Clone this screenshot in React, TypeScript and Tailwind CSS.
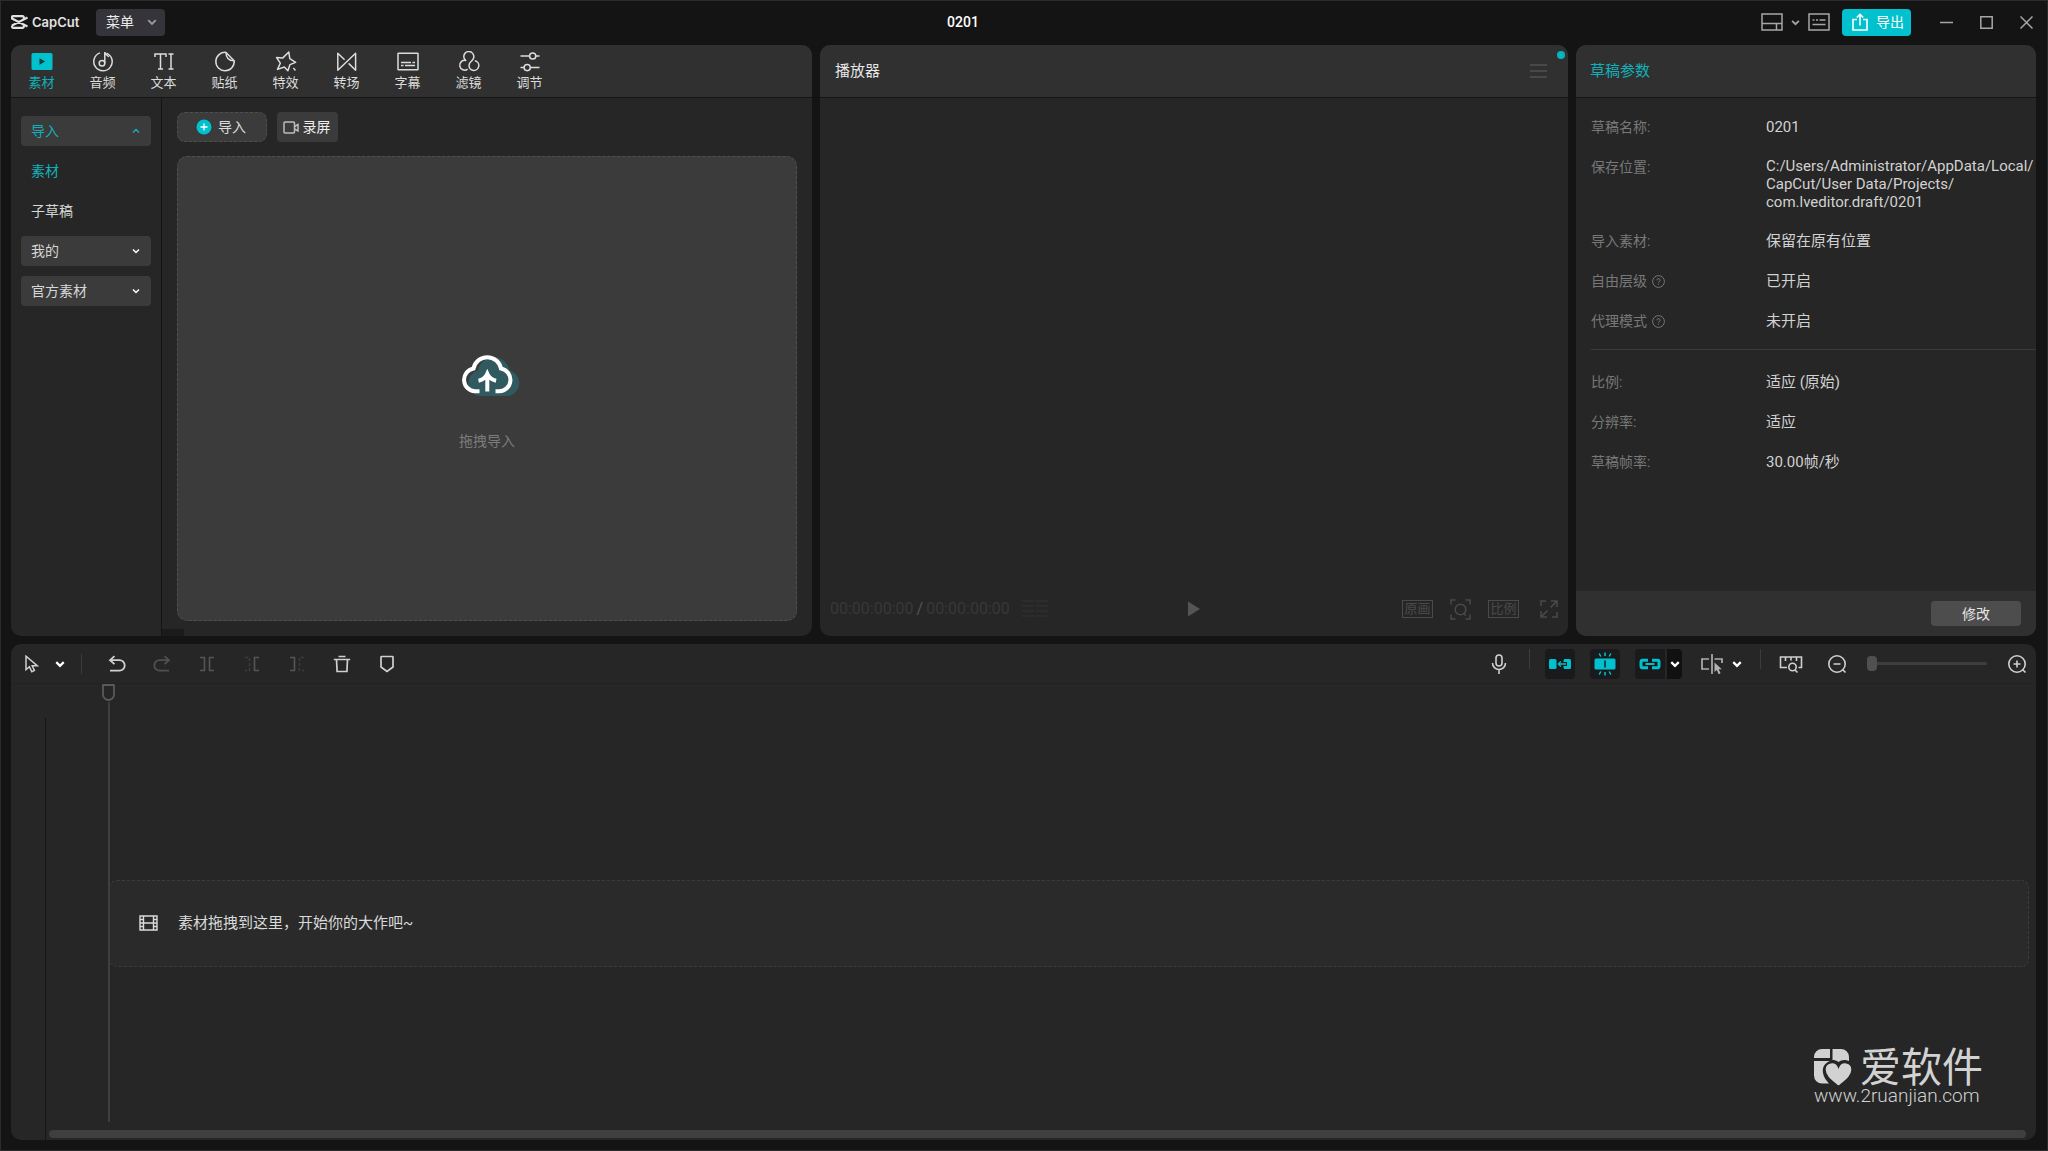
import type { ReactNode } from 'react';

type IconProps = { w?: number; h?: number; box?: string; className?: string; sw?: number; children: ReactNode };

function Icon({ w = 20, h = 20, box, className = '', sw = 1.5, children }: IconProps) {
  return (
    <svg
      width={w}
      height={h}
      viewBox={box ?? `0 0 ${w} ${h}`}
      fill="none"
      stroke="currentColor"
      strokeWidth={sw}
      className={`shrink-0 ${className}`}
      aria-hidden="true"
    >
      {children}
    </svg>
  );
}

function Chevron({ up = false, w = 8, sw = 2, className = '' }: { up?: boolean; w?: number; sw?: number; className?: string }) {
  return (
    <Icon w={w} h={w} box="0 0 8 8" sw={sw} className={className}>
      <path d={up ? 'M1 5.5 4 2.5l3 3' : 'M1 2.5l3 3 3-3'} />
    </Icon>
  );
}

const tabs: { label: string; icon: ReactNode; active?: boolean }[] = [
  {
    label: '素材',
    active: true,
    icon: (
      <>
        <rect x="0.5" y="2" width="21" height="17" rx="1.5" fill="#00c1cd" stroke="none" />
        <path d="M8.5 7.2v6.6l5.6-3.3z" fill="#12393c" stroke="none" />
      </>
    ),
  },
  {
    label: '音频',
    icon: (
      <>
        <path d="M8 1.9a9.2 9.2 0 1 0 6.5 0.2" />
        <circle cx="10" cy="12.3" r="2.8" />
        <path d="M12.8 12.3V1c0 3 3 2.5 3.8 5" />
      </>
    ),
  },
  {
    label: '文本',
    icon: <path d="M2 6V3h11v3M7.5 3v15M5 18h5M15.5 3h5M15.5 18h5M18 3v15" />,
  },
  {
    label: '贴纸',
    icon: (
      <>
        <path d="M12 1.4a9.2 9.2 0 1 0 8.2 8.4z" />
        <path d="M12 1.4c0 5 2 8.2 8.2 8.4" />
      </>
    ),
  },
  {
    label: '特效',
    icon: (
      <path
        d="M18.4 16.9l2 2.6M12.9 19.8l-3.6-3.8-6.8 2.4 2.8-6.2L1.6 6.6l6 .5L13.8 1l1 6.6 5.8 3.8-5.6 2.2z"
        strokeLinejoin="round"
      />
    ),
  },
  {
    label: '转场',
    icon: <path d="M8.6 8.7 1.8 2.2v17l17.8-17v17l-7-6.8" strokeLinejoin="round" />,
  },
  {
    label: '字幕',
    icon: (
      <>
        <rect x="1" y="2.2" width="20" height="16.6" rx="0.5" />
        <path d="M4 11.5h10M15.5 11.5H18M4 14.5h2.5M8 14.5h10" />
      </>
    ),
  },
  {
    label: '滤镜',
    icon: (
      <>
        <path d="M8.2 9.8a5 5 0 1 1 6.6-1.2c-1 1.6-3.8 2.5-3.8 6a4.9 4.9 0 1 0 5.8-4.9" />
        <path d="M8 9.5a4.9 4.9 0 1 0 1.6 8.6" />
      </>
    ),
  },
  {
    label: '调节',
    icon: (
      <>
        <path d="M1.5 5h9M17 5h3.5M1.5 16.6h3.5M11.5 16.6h9" />
        <circle cx="13.7" cy="5" r="3.1" />
        <circle cx="8.2" cy="16.6" r="3.1" />
      </>
    ),
  },
];

function TitleBar() {
  return (
    <header className="flex h-11 shrink-0 items-center justify-between pr-[3px] pb-0.5">
      <div className="flex items-center">
        <Icon w={17} h={14} sw={2.2} className="text-[#e2e2e2]">
          <path d="M12.8 3.6V2.4a1.2 1.2 0 0 0-1.2-1.2H2.2A1.2 1.2 0 0 0 1 2.4v1.1l15.5 8M1 10.5v1.1a1.2 1.2 0 0 0 1.2 1.2h9.4a1.2 1.2 0 0 0 1.2-1.2v-1.2M1 10.5l15.5-8" />
        </Icon>
        <span className="ml-1 w-[50px] font-[Inter] text-[13px] leading-5 font-semibold text-[#e2e2e2]">CapCut</span>
        <button className="ml-3.5 flex h-[27px] w-[69px] items-center justify-between rounded-sm bg-[#34343a] pr-2 pl-2.5 text-sm text-[#ececec]">
          菜单
          <Chevron w={10} sw={1.6} className="text-[#9a9a9c]" />
        </button>
      </div>
      <h1 className="text-sm font-medium text-white">0201</h1>
      <div className="flex items-center text-[#a6a6a6]">
        <button aria-label="布局" className="flex items-center gap-2">
          <Icon w={22} h={18}>
            <path d="M1 1h20v16H1zM1 10.5h20M15.5 10.5V17" />
          </Icon>
          <Chevron w={9} sw={1.6} />
        </button>
        <button aria-label="快捷键" className="ml-2">
          <Icon w={22} h={18}>
            <path d="M1 1h20v16H1zM4.5 7h2M8 7h2M11.5 7h6M4.5 11.5h13" />
          </Icon>
        </button>
        <button className="ml-3 flex h-[27px] w-[69px] items-center gap-2 rounded bg-[#00c1cd] pl-2.5 text-sm text-white">
          <Icon w={16} h={18} sw={1.6}>
            <path d="M5 6.5H1V17h14V6.5h-4M8 12.5v-11M4.8 4.5 8 1.3l3.2 3.2" />
          </Icon>
          导出
        </button>
        <button aria-label="最小化" className="ml-[29px]">
          <Icon w={13} h={13}><path d="M0 6.5h13" /></Icon>
        </button>
        <button aria-label="最大化" className="ml-[27px]">
          <Icon w={13} h={13}><path d="M.8.8h11.4v11.4H.8z" /></Icon>
        </button>
        <button aria-label="关闭" className="ml-[27px]">
          <Icon w={13} h={13}><path d="m.5.5 12 12m0-12-12 12" /></Icon>
        </button>
      </div>
    </header>
  );
}

function SideGroup({ label, open = false }: { label: string; open?: boolean }) {
  return (
    <button
      aria-expanded={open}
      className={`flex h-[30px] w-full items-center justify-between rounded bg-[#3b3b3b] pr-[11px] pl-2.5 text-sm ${open ? 'text-[#12b0b9]' : 'text-[#d6d6d6]'}`}
    >
      {label}
      <Chevron up={open} sw={1.5} className={open ? '' : 'text-white'} />
    </button>
  );
}

function MediaPanel() {
  return (
    <section className="flex min-w-0 flex-col overflow-hidden rounded-[10px] bg-[#262626]">
      <nav className="flex h-[53px] shrink-0 border-b border-[#161616] bg-[#303030]">
        {tabs.map((t) => (
          <button
            key={t.label}
            className={`flex w-[61px] flex-col items-center pt-1.5 text-[13px] leading-5 ${t.active ? 'text-[#12b0b9]' : 'text-[#dcdcdc]'}`}
          >
            <Icon w={22} h={22}>{t.icon}</Icon>
            {t.label}
          </button>
        ))}
      </nav>
      <div className="flex min-h-0 flex-1">
        <aside className="flex w-[151px] shrink-0 flex-col gap-2.5 border-r border-[#131313] px-2.5 pt-[18px]">
          <SideGroup label="导入" open />
          <button className="h-[30px] px-2.5 text-left text-sm text-[#12b0b9]">素材</button>
          <button className="h-[30px] px-2.5 text-left text-sm text-[#d6d6d6]">子草稿</button>
          <SideGroup label="我的" />
          <SideGroup label="官方素材" />
        </aside>
        <div className="flex min-w-0 flex-1 flex-col">
          <div className="mx-[15px] mt-3.5 flex gap-2.5">
            <button className="flex h-[30px] w-[90px] items-center justify-center gap-1.5 rounded-lg border border-dashed border-[#4e4e4e] bg-[#3b3b3b] pr-0.5 text-sm text-[#dcdcdc]">
              <Icon w={16} h={16} sw={1.3}>
                <circle cx="8" cy="8" r="7.5" fill="#00c1cd" stroke="none" />
                <path d="M8 4.5v7M4.5 8h7" stroke="#fff" />
              </Icon>
              导入
            </button>
            <button className="flex h-[30px] w-[61px] items-center justify-center gap-1 rounded bg-[#3b3b3b] pr-0.5 text-sm text-[#ececec]">
              <Icon w={16} h={13} className="text-[#bdbdbd]">
                <rect x="1" y="1" width="10.5" height="11" rx="1" />
                <path d="M11.5 5.5 15 3.5V10l-3.5-2" />
              </Icon>
              录屏
            </button>
          </div>
          <div className="mx-[15px] mt-3.5 flex flex-1 flex-col items-center justify-center rounded-[10px] border border-dashed border-[#505050] bg-[#3b3b3b] pt-[26px]">
            <Icon w={68} h={46} box="-8 0 68 46">
              <path
                d="M19 45a13 13 0 0 1-2-25.5 16 16 0 0 1 31.5 0A13 13 0 0 1 47 45z"
                fill="#305a60"
                stroke="none"
              />
              <path
                d="M18.5 40.3H14a11.500 11.500 0 0 1-1.500-22.800 14 14 0 0 1 27.500 0 11.500 11.500 0 0 1-1.500 22.800H34.500M26.300 40.500V22M17.500 29.800c4-.8 7-2.800 8.800-7 1.800 4.200 4.800 6.200 8.800 7"
                stroke="#fff"
                strokeWidth="4"
              />
            </Icon>
            <p className="mt-8 text-sm leading-6 text-[#7c7c7c]">拖拽导入</p>
          </div>
          <div className="mt-2 h-[7px] w-[22px] bg-[#1b1b1b]" />
        </div>
      </div>
    </section>
  );
}

function PlayerPanel() {
  return (
    <section className="flex min-w-0 flex-col overflow-hidden rounded-[10px] bg-[#262626]">
      <div className="relative flex h-[53px] shrink-0 items-center justify-between border-b border-[#161616] bg-[#303030] pr-[21px] pl-[15px]">
        <h2 className="text-[15px] leading-5 text-[#e6e6e6]">播放器</h2>
        <button aria-label="播放器菜单" className="text-[#505050]">
          <Icon w={17} h={14}><path d="M0 1h17M0 7h17M0 13h17" /></Icon>
        </button>
        <span className="absolute top-1.5 right-[3px] size-2 rounded-full bg-[#00b4c0]" />
      </div>
      <div className="flex-1" />
      <div className="flex h-[54px] shrink-0 items-center justify-between px-2.5 text-[#4a4a4a]">
        <div className="flex flex-1 items-center text-base leading-5 text-[#383838]">
          <span>00:00:00:00</span>
          <span className="px-[3px] text-[#555555]">/</span>
          <span>00:00:00:00</span>
          <Icon w={26} h={20} className="ml-3 text-[#2c2c2c]" sw={2}>
            <path d="M0 2h12M14 2h12M0 7h12M14 7h12M0 12h12M14 12h12M0 17h12M14 17h12" />
          </Icon>
        </div>
        <button aria-label="播放" className="text-[#555555]">
          <Icon w={12} h={16}><path d="M0 .5v15L12 8z" fill="currentColor" stroke="none" /></Icon>
        </button>
        <div className="flex flex-1 items-center justify-end gap-[17px]">
          <button className="flex h-[18px] w-[31px] items-center justify-center border border-[#4a4a4a] text-[13px] leading-4">原画</button>
          <button aria-label="缩放">
            <Icon w={21} h={21}>
              <path d="M1 5.500V1h4.500M15.500 1H20v4.500M20 15.500V20h-4.500M5.500 20H1v-4.500" />
              <circle cx="10.5" cy="10.5" r="5.3" />
              <path d="m13.500 14 2.500 2.500" />
            </Icon>
          </button>
          <button className="flex h-[18px] w-[31px] items-center justify-center border border-[#4a4a4a] text-[13px] leading-4">比例</button>
          <button aria-label="全屏" className="ml-1">
            <Icon w={18} h={18}>
              <path d="M1 6V1h5M12 17h5v-5M11 1h6v6M17 1l-6.500 6.500M1 11v6h6M1 17l6.500-6.500" />
            </Icon>
          </button>
        </div>
      </div>
    </section>
  );
}

function Row({ label, help = false, children }: { label: string; help?: boolean; children: ReactNode }) {
  return (
    <div className="flex">
      <dt className="flex w-[175px] shrink-0 items-center gap-[5px] self-start text-sm leading-5 text-[#787878]">
        {label}
        {help && (
          <Icon w={13} h={13} sw={1}>
            <circle cx="6.5" cy="6.5" r="5.9" />
            <path d="M4.900 5.300a1.600 1.600 0 1 1 2.200 1.400q-.6.300-.6 1M6.500 8.800v1" />
          </Icon>
        )}
      </dt>
      <dd className="text-[15px] leading-5 text-[#d2d2d2]">{children}</dd>
    </div>
  );
}

function ParamsPanel() {
  return (
    <section className="flex min-w-0 flex-col overflow-hidden rounded-[10px] bg-[#262626]">
      <div className="flex h-[53px] shrink-0 items-center border-b border-[#161616] bg-[#303030] px-3.5">
        <h2 className="text-[15px] leading-5 text-[#12b0b9]">草稿参数</h2>
      </div>
      <div className="flex-1 pl-[15px]">
        <dl className="flex flex-col gap-5 pt-[19px] pb-[18px]">
          <Row label="草稿名称:">0201</Row>
          <Row label="保存位置:">
            <span className="block leading-[18px]">
              C:/Users/Administrator/AppData/Local/
              <br />
              CapCut/User Data/Projects/
              <br />
              com.lveditor.draft/0201
            </span>
          </Row>
          <Row label="导入素材:">保留在原有位置</Row>
          <Row label="自由层级" help>已开启</Row>
          <Row label="代理模式" help>未开启</Row>
        </dl>
        <dl className="flex flex-col gap-5 border-t border-[#3a3a3a] pt-[22px]">
          <Row label="比例:">适应 (原始)</Row>
          <Row label="分辨率:">适应</Row>
          <Row label="草稿帧率:">30.00帧/秒</Row>
        </dl>
      </div>
      <div className="flex h-[45px] shrink-0 items-center justify-end bg-[#303030] px-[15px]">
        <button className="h-[25px] w-[90px] rounded bg-[#4d4d4d] text-sm text-[#e6e6e6]">修改</button>
      </div>
    </section>
  );
}

function Tool({ label, className = '', children }: { label: string; className?: string; children: ReactNode }) {
  return (
    <button aria-label={label} className={`flex items-center justify-center ${className}`}>
      {children}
    </button>
  );
}

function Toolbar() {
  return (
    <div className="flex h-10 shrink-0 items-center justify-between border-b border-[#222222] pr-[9px] pl-3.5 text-[#d0d0d0]">
      <div className="flex items-center">
        <Tool label="选择" className="gap-4">
          <Icon w={14} h={18}>
            <path d="M1 1.200v13.500l3.400-3 2.400 5 2.600-1.200-2.200-4.700h5z" />
          </Icon>
          <Chevron w={10} sw={1.8} className="text-white" />
        </Tool>
        <span className="ml-4 h-5 w-px bg-[#3c3c3c]" />
        <div className="ml-3 flex">
          <Tool label="撤销" className="w-[45px]">
            <Icon w={18} h={18} sw={1.8}>
              <path d="M6.500 1.200 2 5.200l4.500 4M2 5.200h9.500a5.200 5.200 0 0 1 0 10.400H2" />
            </Icon>
          </Tool>
          <Tool label="重做" className="w-[45px] text-[#505050]">
            <Icon w={18} h={18} sw={1.8}>
              <path d="m11.500 1.200 4.500 4-4.500 4M16 5.200H6.500a5.200 5.200 0 0 0 0 10.400H16" />
            </Icon>
          </Tool>
          <Tool label="分割" className="w-[45px] text-[#555555]">
            <Icon w={16} h={16} sw={1.6}>
              <path d="M1 1.500h4.500v13H1M15 1.500h-4.500v13H15" />
            </Icon>
          </Tool>
          <Tool label="向左裁剪" className="w-[45px] text-[#555555]">
            <Icon w={16} h={16} sw={1.6}>
              <path d="M1 1.500h4.500v13H1" strokeDasharray="3 2" stroke="#3c3c3c" />
              <path d="M15 1.500h-4.500v13H15" />
            </Icon>
          </Tool>
          <Tool label="向右裁剪" className="w-[45px] text-[#555555]">
            <Icon w={16} h={16} sw={1.6}>
              <path d="M1 1.500h4.500v13H1" />
              <path d="M15 1.500h-4.500v13H15" strokeDasharray="3 2" stroke="#3c3c3c" />
            </Icon>
          </Tool>
          <Tool label="删除" className="w-[45px]">
            <Icon w={18} h={18} sw={1.7}>
              <path d="M5.500 1.500h7M.8 4.500h16.400M3.500 4.500l.6 12h9.800l.6-12" />
            </Icon>
          </Tool>
          <Tool label="标记" className="w-[45px]">
            <Icon w={14} h={18} sw={1.7}>
              <path d="M1 2.200a.7.700 0 0 1 .7-.7h10.600a.7.700 0 0 1 .7.7V12l-6 4.500L1 12z" />
            </Icon>
          </Tool>
        </div>
      </div>
      <div className="flex items-center">
        <Tool label="录音">
          <Icon w={16} h={20} sw={1.6}>
            <rect x="5" y="1" width="6" height="11" rx="3" />
            <path d="M1.500 9a6.500 6.500 0 0 0 13 0M8 15.500V20" />
          </Icon>
        </Tool>
        <span className="ml-[22px] h-5 w-px self-start bg-[#3c3c3c]" />
        <Tool label="主轨磁吸" className="ml-[15px] size-[30px] rounded bg-[#1a1a1c] text-[#00c1cd]">
          <Icon w={24} h={12}>
            <path
              d="M2.500 1H7a1.500 1.500 0 0 1 1.500 1.500v7A1.500 1.500 0 0 1 7 11H2.500A1.500 1.500 0 0 1 1 9.500v-7A1.500 1.500 0 0 1 2.500 1zM17 1h4.500A1.500 1.500 0 0 1 23 2.500v7a1.500 1.500 0 0 1-1.500 1.500H17a1.500 1.500 0 0 1-1.500-1.500V8H19V4h-3.500V2.500A1.500 1.500 0 0 1 17 1z"
              fill="currentColor"
              stroke="none"
            />
            <path d="M18 6h-7.500M12.800 3.500 10.300 6l2.500 2.500" strokeWidth="1.3" />
          </Icon>
        </Tool>
        <Tool label="自动吸附" className="ml-[15px] size-[30px] rounded bg-[#1a1a1c] text-[#00c1cd]">
          <Icon w={24} h={24}>
            <path d="M3 6.500h18A1.500 1.500 0 0 1 22.500 8v8a1.500 1.500 0 0 1-1.500 1.500H3A1.500 1.500 0 0 1 1.500 16V8A1.500 1.500 0 0 1 3 6.500z" fill="currentColor" stroke="none" />
            <path d="M12 8.500v7" stroke="#1a1a1c" />
            <path d="M12 .5V4M6.200 1.500l1.600 3M17.800 1.500l-1.600 3M12 20v3.500M6.200 22.500l1.600-3M17.800 22.500l-1.600-3" />
          </Icon>
        </Tool>
        <Tool label="联动" className="ml-[15px] size-[30px] rounded-l bg-[#1a1a1c] text-[#00c1cd]">
          <Icon w={24} h={12} sw={3}>
            <path d="M10 2.200H4.500A1.500 1.500 0 0 0 3 3.700v4.600a1.500 1.500 0 0 0 1.500 1.500H10M14 2.200h5.500A1.500 1.500 0 0 1 21 3.700v4.600a1.500 1.500 0 0 1-1.500 1.500H14" />
            <path d="M7.500 6h9" strokeWidth="1.8" />
          </Icon>
        </Tool>
        <Tool label="联动选项" className="ml-0.5 h-[30px] w-[15px] rounded-r bg-[#111111] text-white">
          <Chevron w={10} sw={1.8} />
        </Tool>
        <Tool label="预览轴" className="ml-[18px] gap-2 text-[#b0b0b0]">
          <Icon w={24} h={22} sw={1.7}>
            <path d="M9 6H2v10h7M14.500 6H22v4M12 1v20" />
            <path d="M14.500 9.500v9.500l2.300-2 1.800 4.200 2-1-1.900-4h3.100z" fill="currentColor" stroke="none" />
          </Icon>
          <Chevron w={10} sw={1.8} className="text-white" />
        </Tool>
        <span className="ml-[18px] h-5 w-px self-start bg-[#3c3c3c]" />
        <Tool label="适配时间线" className="ml-[18px]">
          <Icon w={24} h={20} sw={1.6}>
            <path d="M8 13.500H1.500V3h21v10.500h-3M6.500 3v4M12 3v3.500M17.500 3v4" />
            <circle cx="13.5" cy="13" r="3.7" />
            <path d="m16 16 2.500 2.500" />
          </Icon>
        </Tool>
        <Tool label="缩小" className="ml-6">
          <Icon w={20} h={20} sw={1.6}>
            <circle cx="10" cy="10" r="8.2" />
            <path d="M6.500 10h7M15.500 15.500l3 3" />
          </Icon>
        </Tool>
        <input
          type="range"
          aria-label="时间线缩放"
          defaultValue={0}
          className="ml-5 h-4 w-[120px] appearance-none bg-transparent [&::-webkit-slider-runnable-track]:h-[3px] [&::-webkit-slider-runnable-track]:rounded-full [&::-webkit-slider-runnable-track]:bg-[#3e3e3e] [&::-webkit-slider-thumb]:-mt-1.5 [&::-webkit-slider-thumb]:h-[15px] [&::-webkit-slider-thumb]:w-2.5 [&::-webkit-slider-thumb]:appearance-none [&::-webkit-slider-thumb]:rounded [&::-webkit-slider-thumb]:bg-[#505050]"
        />
        <Tool label="放大" className="ml-5">
          <Icon w={20} h={20} sw={1.6}>
            <circle cx="10" cy="10" r="8.2" />
            <path d="M6.500 10h7M10 6.500v7M15.500 15.500l3 3" />
          </Icon>
        </Tool>
      </div>
    </div>
  );
}

function Watermark() {
  return (
    <div className="absolute right-[50px] bottom-9 w-[172px] text-[#d2d2d2]">
      <div className="flex h-10 items-center gap-2">
        <Icon w={38} h={38}>
          <path d="M8 0h8v9H0V8a8 8 0 0 1 8-8zM18.500 0H27a8 8 0 0 1 8 8v4c-4-2-8-1-10.500 1-2-1.500-4-2-6-2zM0 12h16c-5 2-8 6-7 12 .5 4 3 7 6 10.500H8a8 8 0 0 1-8-8z" fill="currentColor" stroke="none" />
          <path d="M24.500 37.500C18 32 11 27.500 11 21a7 7 0 0 1 13.500-3A7 7 0 0 1 38 21c0 6.500-7 11-13.500 16.500z" fill="currentColor" stroke="#262626" strokeWidth="1.5" />
        </Icon>
        <span className="text-[41px] leading-10 font-normal whitespace-nowrap">爱软件</span>
      </div>
      <a href="#" className="block text-[19px] leading-4 font-light whitespace-nowrap">www.2ruanjian.com</a>
    </div>
  );
}

function Timeline() {
  return (
    <section className="relative flex min-h-0 flex-[496] flex-col overflow-hidden rounded-[10px] bg-[#262626]">
      <Toolbar />
      <div className="flex min-h-0 flex-1">
        <div className="mt-[34px] w-[35px] shrink-0 border-r border-[#151515]" />
        <div className="relative flex min-w-0 flex-1 flex-col pb-0.5">
          <div className="flex-[195]" />
          <div className="mr-[7px] ml-[63px] flex h-[87px] shrink-0 items-center gap-5 rounded-lg border border-dashed border-[#3c3c3c] bg-[#2a2a2a] pl-[29px]">
            <Icon w={19} h={16} sw={1.4} className="text-[#dadada]">
              <path d="M1 1h17v14H1zM4.500 1v14M14.500 1v14M4.500 8h10M1 4.500h3.500M1 8h3.500M1 11.500h3.500M14.500 4.500H18M14.500 8H18M14.500 11.500H18" />
            </Icon>
            <p className="text-[15px] leading-5 text-[#dadada]">素材拖拽到这里，开始你的大作吧~</p>
          </div>
          <div className="flex-[163]" />
          <div className="mr-2.5 ml-[3px] h-2 shrink-0 rounded-full bg-[#3f3f3f]" />
          <div className="absolute top-0 bottom-[18px] left-14 flex w-[13px] flex-col items-center text-[#5a5a5a]">
            <Icon w={13} h={18} sw={1.8}>
              <path d="M1 1h11v9.500a5.500 5.500 0 0 1-11 0z" strokeLinejoin="round" />
            </Icon>
            <span className="w-0.5 flex-1 bg-[#3f3f3f]" />
          </div>
        </div>
      </div>
      <Watermark />
    </section>
  );
}

export default function App() {
  return (
    <div className="flex h-screen flex-col border border-[#2b2b2b] bg-[#141414] pr-[11px] pb-2.5 pl-2.5 font-[Roboto,'Noto_Sans_CJK_SC',sans-serif]">
      <TitleBar />
      <main className="flex min-h-0 flex-1 flex-col gap-2">
        <div className="grid min-h-0 flex-[591] grid-cols-[801fr_748fr_460fr] gap-2">
          <MediaPanel />
          <PlayerPanel />
          <ParamsPanel />
        </div>
        <Timeline />
      </main>
    </div>
  );
}
